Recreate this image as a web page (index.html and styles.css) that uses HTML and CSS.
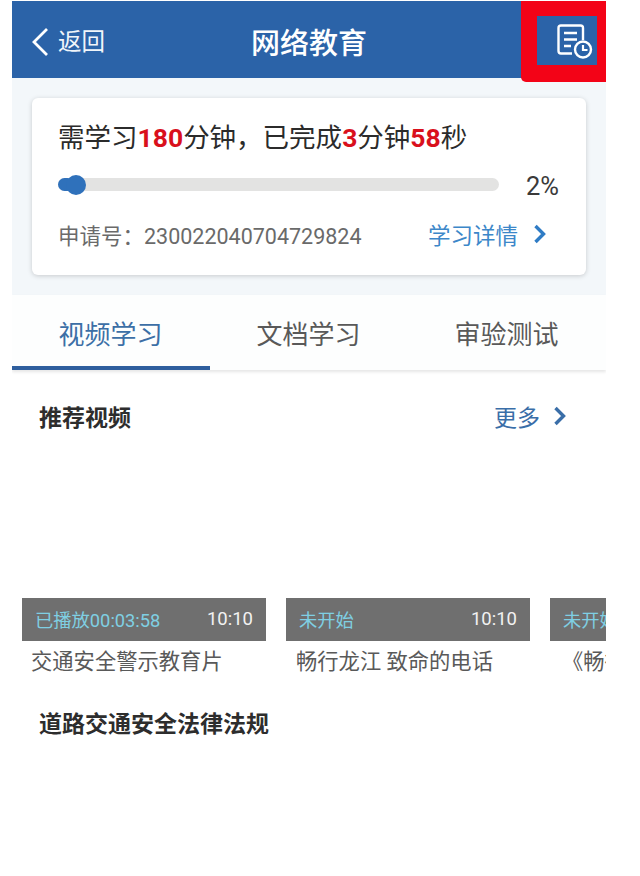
FILE: index.html
```html
<!DOCTYPE html>
<html lang="zh">
<head>
    <meta charset="UTF-8">
    <title>网络教育</title>
    <link rel="stylesheet" href="styles.css">
</head>
<body>
<div class="screen">
    <div class="header">
        <div class="back">
            <svg class="back-icon" width="18" height="30" viewBox="0 0 18 30">
                <path d="M16 2 L3 15 L16 28" fill="none" stroke="#fff" stroke-width="2.800"/>
            </svg>
            <span>返回</span>
        </div>
        <div class="title">网络教育</div>
    </div>
    <div class="record-mark">
        <div class="record-btn">
            <svg width="38" height="36" viewBox="0 0 38 36">
                <path d="M27 16 V4 Q27 1.500 24.500 1.500 H5 Q2.500 1.500 2.500 4 V27 Q2.500 29.500 5 29.500 H16" fill="none" stroke="#fff" stroke-width="2.400"/>
                <path d="M8 9 H21 M8 15.500 H21 M8 22 H15" fill="none" stroke="#fff" stroke-width="2.400"/>
                <circle cx="27" cy="25.500" r="8" fill="#2b63a8" stroke="#fff" stroke-width="2.400"/>
                <path d="M27 21 V26 H31.500" fill="none" stroke="#fff" stroke-width="2.200"/>
            </svg>
        </div>
    </div>

    <div class="summary">
        <div class="card">
            <div class="card-title">需学习<b>180</b>分钟，已完成<b>3</b>分钟<b>58</b>秒</div>
            <div class="progress-row">
                <div class="track">
                    <div class="fill" style="width: 2%"></div>
                    <div class="knob"></div>
                </div>
                <div class="percent">2%</div>
            </div>
            <div class="card-foot">
                <span class="apply-no">申请号：230022040704729824</span>
                <span class="detail">学习详情
                    <svg width="14" height="20" viewBox="0 0 14 20">
                        <path d="M2.500 2 L10.500 10 L2.500 18" fill="none" stroke="currentColor" stroke-width="3.400"/>
                    </svg>
                </span>
            </div>
        </div>
    </div>

    <div class="tabs">
        <div class="tab active">视频学习</div>
        <div class="tab">文档学习</div>
        <div class="tab">审验测试</div>
    </div>

    <div class="section-head">
        <span class="section-title">推荐视频</span>
        <span class="more">更多
            <svg width="14" height="20" viewBox="0 0 14 20">
                <path d="M2.500 2 L10.500 10 L2.500 18" fill="none" stroke="currentColor" stroke-width="3.400"/>
            </svg>
        </span>
    </div>

    <div class="videos">
        <div class="video">
            <div class="video-bar"><span class="state">已播放00:03:58</span><span class="time">10:10</span></div>
            <div class="video-name">交通安全警示教育片</div>
        </div>
        <div class="video">
            <div class="video-bar"><span class="state">未开始</span><span class="time">10:10</span></div>
            <div class="video-name">畅行龙江 致命的电话</div>
        </div>
        <div class="video">
            <div class="video-bar"><span class="state">未开始</span><span class="time">10:10</span></div>
            <div class="video-name">《畅行龙江》</div>
        </div>
    </div>

    <div class="section-head second">
        <span class="section-title">道路交通安全法律法规</span>
    </div>
</div>
</body>
</html>
```

FILE: styles.css
```css
html, body {
    margin: 0;
    padding: 0;
    background-color: #fff;
}

body {
    font-family: Roboto, "Noto Sans CJK SC", sans-serif;
    height: 876px;
    overflow: hidden;
}

.screen {
    position: relative;
    width: 594px;
    margin: 1px 0 0 12px;
    overflow: hidden;
}

.header {
    position: relative;
    height: 77px;
    display: flex;
    align-items: center;
    justify-content: center;
    background-color: #2b63a8;
    color: #fff;
}

.back {
    position: absolute;
    left: 19px;
    top: 25px;
    display: flex;
    align-items: center;
    gap: 9px;
    font-size: 23.500px;
    line-height: 32px;
    color: #f0f5fa;
}

.title {
    font-size: 29px;
    font-weight: 500;
    line-height: 40px;
    margin-top: 8px;
}

.record-mark {
    position: absolute;
    top: 0;
    right: 0;
    width: 85px;
    height: 81px;
    box-sizing: border-box;
    padding: 15px 9px 17px 16px;
    background-color: #f30317;
    border-bottom-left-radius: 5px;
}

.record-btn {
    height: 49px;
    display: flex;
    align-items: center;
    justify-content: flex-end;
    background-color: #2b63a8;
    padding: 2px 3px 0 0;
    box-sizing: border-box;
}

.summary {
    height: 177px;
    padding: 20px;
    background-color: #f3f7fa;
}

.card {
    height: 177px;
    box-sizing: border-box;
    padding: 20px 26px 0 26px;
    background-color: #fff;
    border-radius: 6px;
    box-shadow: 0 1px 5px rgba(0, 0, 0, 0.18);
}

.card-title {
    font-size: 26.500px;
    line-height: 40px;
    color: #2b2b2b;
}

.card-title b {
    color: #d9101c;
    font-weight: 700;
}

.progress-row {
    display: flex;
    align-items: center;
    margin-top: 8px;
    height: 36px;
}

.track {
    position: relative;
    width: 441px;
    height: 13px;
    border-radius: 7px;
    background-color: #e3e3e2;
}

.fill {
    height: 13px;
    min-width: 16px;
    border-radius: 7px;
    background-color: #2f71bb;
}

.knob {
    position: absolute;
    left: 8px;
    top: -3px;
    width: 20px;
    height: 20px;
    border-radius: 50%;
    background-color: #2f71bb;
}

.percent {
    margin-left: 27px;
    font-size: 25.500px;
    line-height: 32px;
    color: #3a3a3a;
    position: relative;
    top: 2px;
}

.card-foot {
    display: flex;
    align-items: center;
    justify-content: space-between;
    margin-top: 16px;
    height: 32px;
    padding-right: 13px;
}

.apply-no {
    font-size: 21.500px;
    color: #6a6a6a;
}

.detail, .more {
    display: flex;
    align-items: center;
}

.detail {
    gap: 15px;
    font-size: 22.500px;
    color: #3c87c9;
}

.detail svg {
    color: #2f7cc5;
}

.tabs {
    display: grid;
    grid-template-columns: repeat(3, 1fr);
    height: 75px;
    background-color: #fdfefe;
    box-shadow: 0 2px 3px rgba(0, 0, 0, 0.1);
}

.tab {
    display: flex;
    align-items: center;
    justify-content: center;
    box-sizing: border-box;
    padding: 0 1px 0 0;
    font-size: 26px;
    color: #595959;
}

.tab.active {
    color: #3c6fa6;
    border-bottom: 4px solid #2f5f9e;
    padding-top: 4px;
}

.section-head {
    display: flex;
    align-items: center;
    justify-content: space-between;
    height: 36px;
    margin-top: 28px;
    padding: 0 39px 0 27px;
}

.section-title {
    font-size: 23px;
    font-weight: 700;
    color: #2d2d2d;
}

.more {
    gap: 13px;
    font-size: 23px;
    color: #3a6ea8;
}

.videos {
    display: flex;
    gap: 20px;
    margin-top: 164px;
    padding-left: 10px;
}

.video {
    flex: 0 0 244px;
}

.video-bar {
    display: flex;
    align-items: center;
    justify-content: space-between;
    height: 43px;
    padding: 0 13px 2px 13px;
    box-sizing: border-box;
    background-color: #6f6f6f;
}

.state {
    font-size: 18.300px;
    color: #7fcfe3;
}

.time {
    font-size: 18.500px;
    color: #f2f2f2;
}

.video-name {
    margin-top: 5px;
    padding-left: 10px;
    font-size: 21.300px;
    line-height: 32px;
    color: #595959;
    white-space: nowrap;
}

.video:first-child .video-name {
    padding-left: 9px;
}

.video:last-child .video-name {
    padding-left: 12px;
}

.section-head.second {
    margin-top: 26px;
}
```
